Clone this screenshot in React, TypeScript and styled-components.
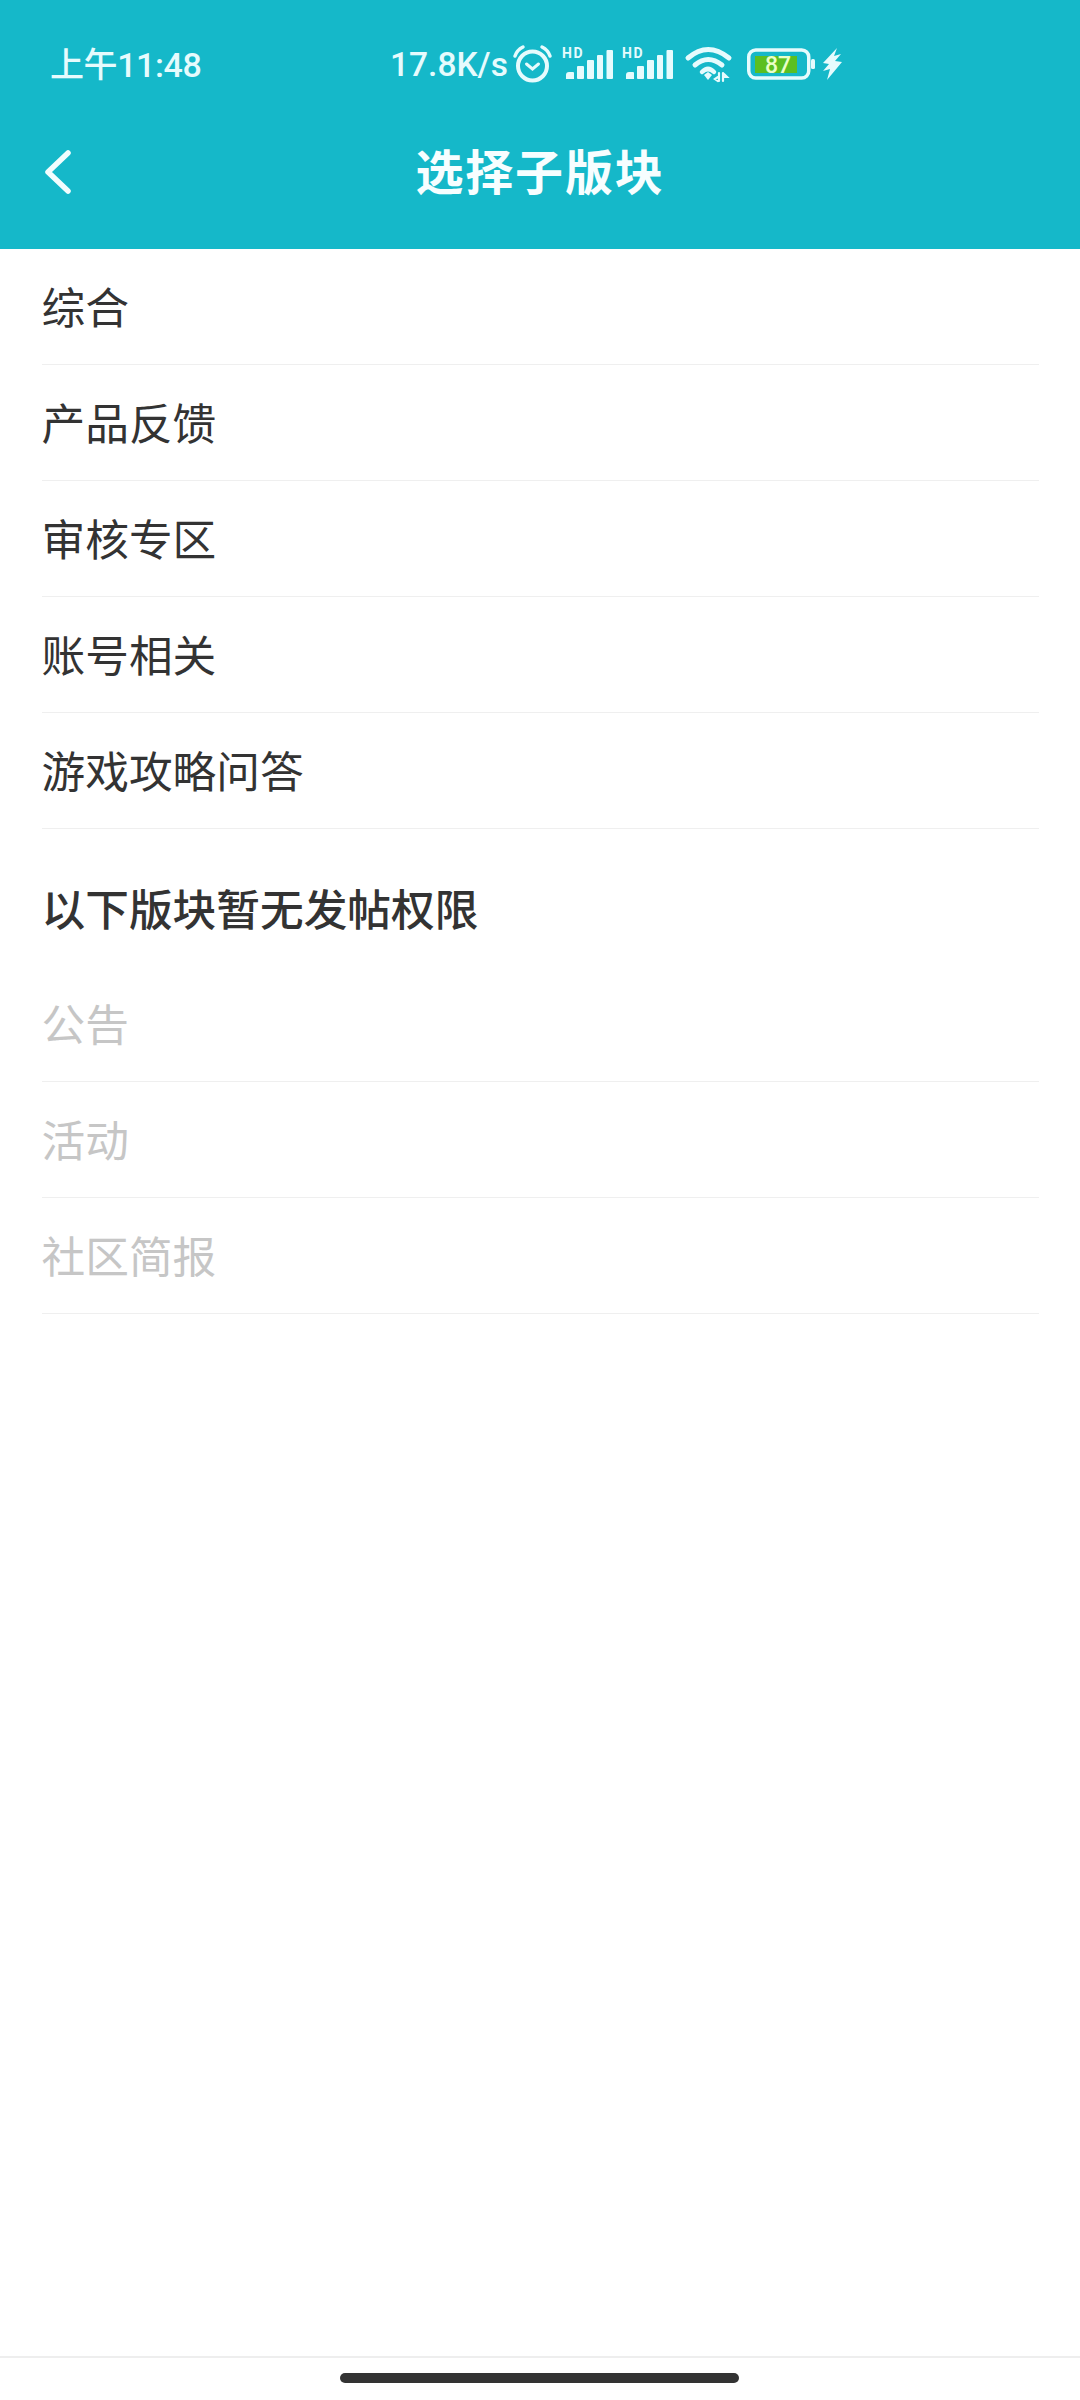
import React from "react";
import styled, { createGlobalStyle } from "styled-components";

const Global = createGlobalStyle`
  html, body { margin: 0; padding: 0; background: #fff; }
  #root { width: 1080px; height: 2400px; }
`;

const CJK = `"Noto Sans CJK SC", "Noto Sans", sans-serif`;

const Page = styled.div`
  width: 1080px;
  height: 2400px;
  display: flex;
  flex-direction: column;
  background: #fff;
  font-family: ${CJK};
`;

const Header = styled.header`
  height: 249px;
  flex: none;
  background: #15b8c9;
  display: flex;
  flex-direction: column;
`;

const StatusBar = styled.div`
  height: 128px;
  flex: none;
  display: flex;
  align-items: center;
  color: #e6fbfd;
  padding-left: 50px;
`;

const Time = styled.span`
  width: 340px;
  flex: none;
  padding-top: 2px;
  font: 500 34px/1 Roboto, ${CJK};
  letter-spacing: -0.4px;
`;

const Speed = styled.span`
  width: 122px;
  flex: none;
  padding-top: 2px;
  font: 500 33.5px/1 Roboto, sans-serif;
`;

const Icons = styled.div`
  display: flex;
  align-items: center;
  color: #e6fbfd;
`;

const Icon = styled.svg<{ $ml: number }>`
  display: block;
  flex: none;
  overflow: visible;
  margin-left: ${(p) => p.$ml}px;
`;

const HdLabel = styled.text`
  font: 700 14px Roboto, sans-serif;
  letter-spacing: 1.5px;
  fill: currentColor;
`;

const BatteryLabel = styled.text`
  font: 500 23px Roboto, sans-serif;
  fill: #eaffc8;
`;

const NavBar = styled.nav`
  flex: 1;
  position: relative;
  display: flex;
  align-items: flex-start;
  justify-content: center;
`;

const BackButton = styled.button`
  position: absolute;
  left: 44px;
  top: 20px;
  padding: 0;
  border: 0;
  background: none;
  color: #f2fdfe;
  line-height: 0;
`;

const Title = styled.h1`
  margin: 10px 0 0;
  font: 700 48px/62px ${CJK};
  letter-spacing: 1.8px;
  color: #f7feff;
`;

const List = styled.ul`
  list-style: none;
  margin: 0;
  padding: 0;
`;

const Row = styled.li<{ $disabled?: boolean }>`
  height: 116px;
  box-sizing: border-box;
  margin: 0 41px 0 42px;
  display: flex;
  align-items: center;
  border-bottom: 1px solid #efefef;
  font-size: 43.7px;
  line-height: 1;
  color: ${(p) => (p.$disabled ? "#c6c6c6" : "#333333")};
`;

const RowText = styled.span`
  margin: -2px 0 0 -0.5px;
`;

const SectionTitle = styled.h2`
  margin: 0;
  padding: 20px 0 0 41.5px;
  box-sizing: border-box;
  height: 137px;
  display: flex;
  align-items: center;
  font-size: 43.7px;
  font-weight: 500;
  line-height: 1;
  color: #333333;
`;

const Spacer = styled.div`
  flex: 1;
`;

const HomeArea = styled.footer`
  flex: none;
  height: 44px;
  box-sizing: border-box;
  border-top: 2px solid #eeeeee;
  display: flex;
  justify-content: center;
  padding: 15px 1px 0 0;
`;

const HomeBar = styled.div`
  width: 399px;
  height: 10px;
  border-radius: 5px;
  background: #333333;
`;

const Signal = ({ ml }: { ml: number }) => (
  <Icon $ml={ml} width="51" height="34" viewBox="0 0 51 34">
    <HdLabel x="0" y="11">HD</HdLabel>
    <path fill="currentColor" d="M7 25h4a1 1 0 0 1 1 1v6H4v-4a3 3 0 0 1 3-3z" />
    <rect x="15" y="19" width="7" height="13" rx="1" fill="currentColor" />
    <rect x="25" y="13" width="7" height="19" rx="1" fill="currentColor" />
    <rect x="35" y="8" width="6" height="24" rx="1" fill="currentColor" />
    <rect x="44.5" y="3" width="6.5" height="29" rx="1" fill="currentColor" />
  </Icon>
);

const enabled = ["综合", "产品反馈", "审核专区", "账号相关", "游戏攻略问答"];
const disabled = ["公告", "活动", "社区简报"];

export default function App() {
  return (
    <Page>
      <Global />
      <Header>
        <StatusBar>
          <Time>上午11:48</Time>
          <Speed>17.8K/s</Speed>
          <Icons>
            <Icon $ml={0} width="41" height="38" viewBox="0 0 41 38" fill="none" stroke="currentColor" strokeLinecap="round">
              <circle cx="20.5" cy="21" r="14.5" strokeWidth="4" />
              <path d="M14.5 19l6 5 6-5" strokeWidth="3" />
              <path d="M3 11Q5 5 11 2M38 11Q36 5 30 2" strokeWidth="3.5" />
            </Icon>
            <Signal ml={9} />
            <Signal ml={9} />
            <Icon $ml={12} width="48" height="36" viewBox="0 0 48 36" fill="none" stroke="currentColor" strokeLinecap="round">
              <path d="M3 12Q23 -5 44 12" strokeWidth="5" />
              <path d="M10 19Q23 8 37 19" strokeWidth="5" />
              <path d="M17 26Q23 20 29 26" strokeWidth="4.5" />
              <path d="M19 29l4-3 4 3-4 5z" fill="currentColor" stroke="none" />
              <path d="M34 27v8M33 31l-3 2 3 2M38 27v8M39 28l3 3-3 0" strokeWidth="2.2" />
            </Icon>
            <Icon $ml={14} width="68" height="32" viewBox="0 0 68 32">
              <rect x="1.75" y="2" width="60" height="28" rx="7" fill="none" stroke="currentColor" strokeWidth="3.5" />
              <rect x="8" y="8" width="42" height="17" fill="#5bbf21" />
              <BatteryLabel x="31" y="24.5" textAnchor="middle">87</BatteryLabel>
              <rect x="64" y="11" width="4" height="10" rx="1.5" fill="currentColor" />
            </Icon>
            <Icon $ml={7} width="20" height="32" viewBox="0 0 20 32">
              <path fill="currentColor" d="M15 0L1 15l6 1-6 7 7-2-3 11 15-18-7-1 6-7-7 2z" />
            </Icon>
          </Icons>
        </StatusBar>
        <NavBar>
          <BackButton aria-label="返回">
            <svg width="30" height="48" viewBox="0 0 30 48" fill="none" stroke="currentColor" strokeWidth="5.5" strokeLinecap="round" strokeLinejoin="round">
              <path d="M24 5L4 24l20 19" />
            </svg>
          </BackButton>
          <Title>选择子版块</Title>
        </NavBar>
      </Header>
      <List>
        {enabled.map((t) => (
          <Row key={t}><RowText>{t}</RowText></Row>
        ))}
      </List>
      <SectionTitle>以下版块暂无发帖权限</SectionTitle>
      <List>
        {disabled.map((t) => (
          <Row key={t} $disabled><RowText>{t}</RowText></Row>
        ))}
      </List>
      <Spacer />
      <HomeArea>
        <HomeBar />
      </HomeArea>
    </Page>
  );
}
